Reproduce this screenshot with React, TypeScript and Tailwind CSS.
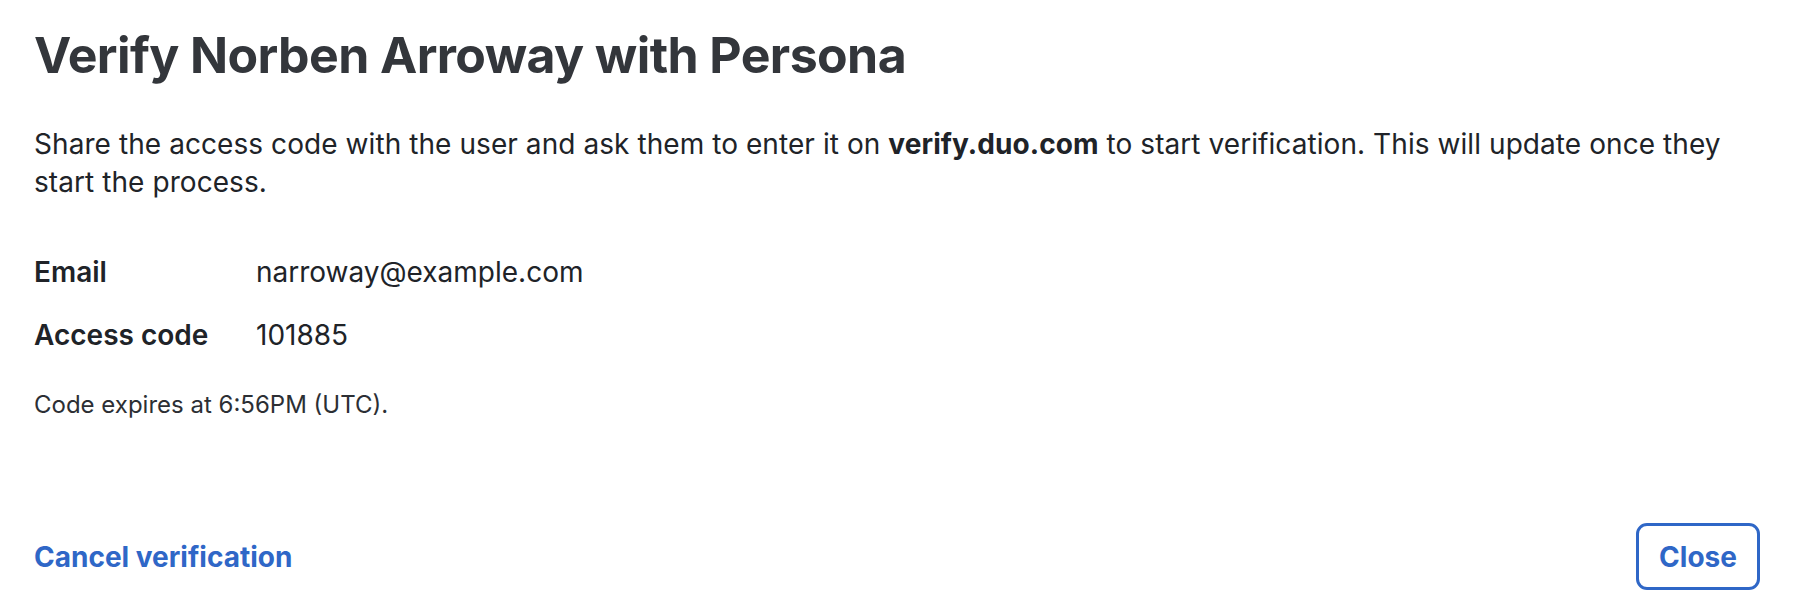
export default function App() {
  return (
    <div className="w-[1800px] h-[610px] bg-white text-[#202328] font-['Inter','Noto_Sans',sans-serif] pl-[34px] pr-[40px] pt-[25px] flex flex-col">
      <h1 className="text-[50px] leading-[60px] font-bold tracking-[-0.012em] text-[#33363b]">
        Verify Norben Arroway with Persona
      </h1>
      <p className="mt-[40px] text-[28px] leading-[38px] tracking-[0.0025em]">
        Share the access code with the user and ask them to enter it on{" "}
        <span className="font-bold">verify.duo.com</span> to start
        verification. This will update once they start the process.
      </p>
      <dl className="mt-[52px] flex flex-col gap-[25px] text-[28px] leading-[38px]">
        <div className="flex">
          <dt className="w-[222px] font-semibold">Email</dt>
          <dd>narroway@example.com</dd>
        </div>
        <div className="flex">
          <dt className="w-[222px] font-semibold">Access code</dt>
          <dd>101885</dd>
        </div>
      </dl>
      <p className="mt-[35px] text-[24px] leading-[32px] text-[#2c2f34]">
        Code expires at 6:56PM (UTC).
      </p>
      <div className="mt-auto mb-[20px] flex items-center justify-between">
        <button className="text-[28px] font-bold text-[#2f67c7]">
          Cancel verification
        </button>
        <button className="w-[124px] h-[67px] border-[3px] border-[#2f67c7] rounded-[11px] text-[28px] font-bold text-[#2f67c7]">
          Close
        </button>
      </div>
    </div>
  );
}
